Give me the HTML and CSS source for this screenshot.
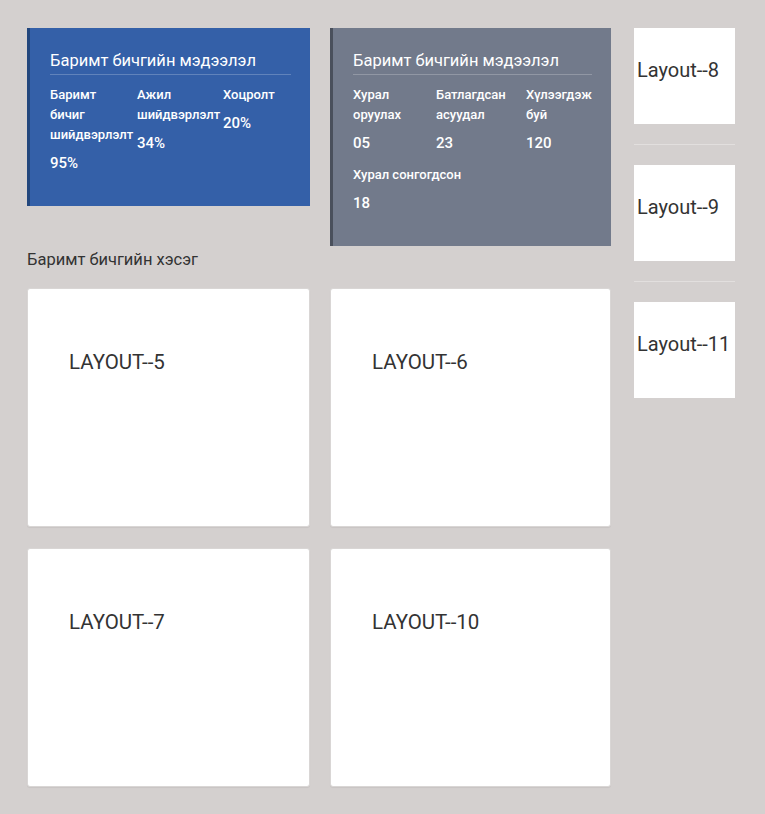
FILE: index.html
```html
<!DOCTYPE html>
<html lang="mn">
<head>
<meta charset="utf-8">
<title>Layout</title>
<link rel="stylesheet" href="styles.css">
</head>
<body>
<div class="page">
  <main class="main">
    <div class="stats">
      <section class="stat-card stat-blue">
        <h2 class="stat-title">Баримт бичгийн мэдээлэл</h2>
        <div class="stat-grid grid-blue">
          <div class="stat-item narrow"><div class="stat-label">Баримт бичиг шийдвэрлэлт</div><div class="stat-value">95%</div></div>
          <div class="stat-item"><div class="stat-label">Ажил шийдвэрлэлт</div><div class="stat-value">34%</div></div>
          <div class="stat-item"><div class="stat-label">Хоцролт</div><div class="stat-value">20%</div></div>
        </div>
      </section>
      <section class="stat-card stat-gray">
        <h2 class="stat-title">Баримт бичгийн мэдээлэл</h2>
        <div class="stat-grid grid-gray">
          <div class="stat-item"><div class="stat-label">Хурал оруулах</div><div class="stat-value">05</div></div>
          <div class="stat-item"><div class="stat-label">Батлагдсан асуудал</div><div class="stat-value">23</div></div>
          <div class="stat-item"><div class="stat-label">Хүлээгдэж буй</div><div class="stat-value">120</div></div>
          <div class="stat-item wide"><div class="stat-label">Хурал сонгогдсон</div><div class="stat-value">18</div></div>
        </div>
      </section>
    </div>
    <h3 class="section-title">Баримт бичгийн хэсэг</h3>
    <div class="cards">
      <div class="card"><span class="card-text">LAYOUT--5</span></div>
      <div class="card"><span class="card-text">LAYOUT--6</span></div>
      <div class="card"><span class="card-text">LAYOUT--7</span></div>
      <div class="card"><span class="card-text">LAYOUT--10</span></div>
    </div>
  </main>
  <aside class="side">
    <div class="side-box">Layout--8</div>
    <hr class="side-sep">
    <div class="side-box">Layout--9</div>
    <hr class="side-sep">
    <div class="side-box">Layout--11</div>
  </aside>
</div>
</body>
</html>
```
FILE: styles.css
```css
* { box-sizing: border-box; }
html, body { margin: 0; padding: 0; }
body {
  background: #d4d0cf;
  font-family: Roboto, "Noto Sans", "Liberation Sans", sans-serif;
  color: #333;
  width: 765px;
  height: 814px;
  overflow: hidden;
}
.page {
  display: grid;
  grid-template-columns: 584px 101px;
  column-gap: 23px;
  padding: 28px 0 0 27px;
  align-items: start;
}
.stats {
  display: grid;
  grid-template-columns: 283px 281px;
  column-gap: 20px;
  align-items: start;
}
.stat-card {
  color: #fff;
  padding: 22px 19px 33px 20px;
}
.stat-blue { background: #3460a8; border-left: 3px solid #22467d; }
.stat-gray { background: #727a8b; border-left: 3px solid #4a505c; }
.stat-title {
  margin: 0;
  font-size: 16.5px;
  font-weight: 400;
  line-height: 22px;
  padding-bottom: 2px;
  border-bottom: 1px solid rgba(255,255,255,0.22);
}
.stat-grid {
  display: grid;
  margin-top: 10px;
  row-gap: 12px;
}
.grid-blue { grid-template-columns: 87px 86px 1fr; }
.grid-gray { grid-template-columns: 83px 90px 1fr; }
.stat-item { padding-right: 2px; }
.stat-item.narrow .stat-label { width: 75px; }
.stat-item.wide { grid-column: 1 / -1; }
.stat-label {
  font-size: 13px;
  font-weight: 500;
  line-height: 20px;
}
.stat-value {
  font-size: 15px;
  font-weight: 500;
  line-height: 20px;
  margin-top: 8px;
}
.section-title {
  margin: 4px 0 0;
  font-size: 16.5px;
  font-weight: 400;
  line-height: 20px;
  color: #333;
}
.cards {
  display: grid;
  grid-template-columns: 283px 281px;
  column-gap: 20px;
  row-gap: 21px;
  margin-top: 18px;
}
.card {
  background: #fff;
  border: 1px solid #d9d6d5;
  border-radius: 3px;
  box-shadow: 0 1px 1px rgba(0,0,0,0.06);
  height: 239px;
  padding: 61px 41px 0;
}
.card-text {
  font-size: 20.5px;
  line-height: 24px;
  color: #333;
}
.side {
  display: flex;
  flex-direction: column;
}
.side-box {
  background: #fff;
  height: 96px;
  padding: 30px 0 0 3px;
  font-size: 20px;
  line-height: 24px;
  color: #333;
  white-space: nowrap;
}
.side-sep {
  margin: 20px 0;
  border: 0;
  height: 1px;
  background: #e2dfde;
}
```
